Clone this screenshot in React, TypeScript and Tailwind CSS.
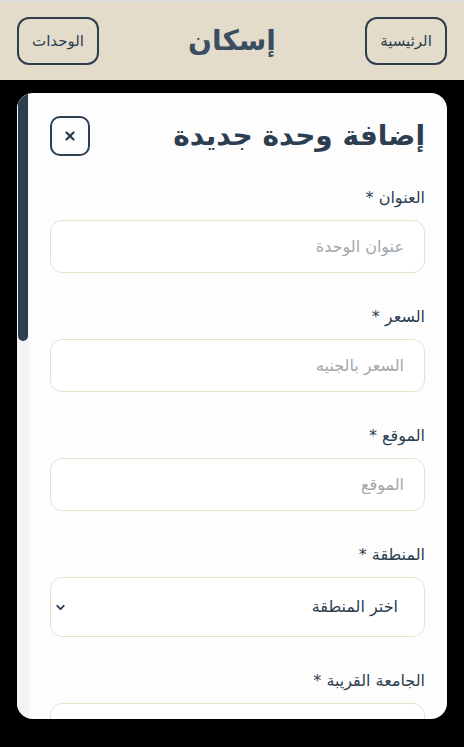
import { ChevronDown, X } from "lucide-react";

const fields: { label: string; placeholder?: string; select?: string }[] = [
  { label: "العنوان", placeholder: "عنوان الوحدة" },
  { label: "السعر", placeholder: "السعر بالجنيه" },
  { label: "الموقع", placeholder: "الموقع" },
  { label: "المنطقة", select: "اختر المنطقة" },
  { label: "الجامعة القريبة", placeholder: "" },
];

export default function App() {
  return (
    <div
      dir="rtl"
      className="h-[747px] bg-black overflow-hidden"
      style={{ fontFamily: '"DejaVu Sans", sans-serif' }}
    >
      {/* Header */}
      <header className="h-[80px] border-t-2 border-[#dcdcdc] bg-[#e4dccb] px-[17px] flex items-center justify-between">
        <button className="h-[48px] w-[82px] rounded-xl border-2 border-[#2c3e50] text-[15px] text-[#2c3e50]">
          الرئيسية
        </button>
        <h1 className="text-[28px] font-bold text-[#3b4d61]">إسكان</h1>
        <button className="h-[48px] w-[82px] rounded-xl border-2 border-[#2c3e50] text-[15px] text-[#2c3e50]">
          الوحدات
        </button>
      </header>

      {/* Modal */}
      <div className="mx-[17px] mt-[13px] h-[626px] rounded-2xl overflow-hidden bg-[#fdfdfd] flex">
        <div className="flex-1 overflow-hidden pt-[23px] pr-[22px] pl-[21px]">
          <div className="h-[40px] flex items-center justify-between mb-[30px]">
            <h2 className="text-[28px] font-bold text-[#2c3e50]">إضافة وحدة جديدة</h2>
            <button className="h-[40px] w-[40px] rounded-[10px] border-2 border-[#2c3e50] flex items-center justify-center text-[#2c3e50]">
              <X className="h-[14px] w-[14px]" strokeWidth={4} />
            </button>
          </div>

          {fields.map((f) => (
            <div key={f.label} className="mb-[32px]">
              <label className="block h-[24px] leading-[24px] text-[16px] text-[#2c3e50] mb-[10px]">
                {f.label} *
              </label>
              {f.select ? (
                <div className="h-[60px] rounded-xl border border-[#eadfcd] bg-white flex items-center justify-between pr-[26px] pl-[3px]">
                  <span className="text-[16px] text-[#2c3e50]">{f.select}</span>
                  <ChevronDown className="h-[13px] w-[13px] text-[#2c3e50]" strokeWidth={3.5} />
                </div>
              ) : (
                <input
                  type="text"
                  placeholder={f.placeholder}
                  className="block w-full h-[53px] rounded-xl border border-[#eadfcd] bg-white px-[20px] text-[16px] text-[#2c3e50] placeholder:text-[#a3a7ab] focus:outline-none"
                />
              )}
            </div>
          ))}
        </div>

        {/* Scrollbar */}
        <div className="w-[12px] shrink-0 bg-[#f2f4f6] pl-[1px] pr-[1px]">
          <div className="h-[248px] rounded-b-full bg-[#2c3e50]" />
        </div>
      </div>
    </div>
  );
}
